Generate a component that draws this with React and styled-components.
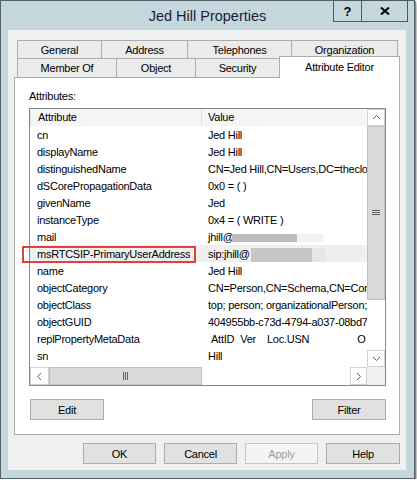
import React from "react";
import styled, { createGlobalStyle } from "styled-components";

const GlobalStyle = createGlobalStyle`
  body {
    margin: 0;
    background: #fff;
    font-family: "Liberation Sans", Arial, sans-serif;
  }
`;

const Window = styled.div`
  width: 415px;
  height: 479px;
  box-sizing: border-box;
  border: 1px solid #56626a;
  background: #c3d7dd;
  display: flex;
  flex-direction: column;
  box-shadow: 1px 1px 0 #7d878c, 3px 3px 5px rgba(0, 0, 0, 0.35);
`;

const TitleBar = styled.div`
  height: 29px;
  flex: none;
  display: grid;
  grid-template-columns: 1fr auto 1fr;
`;

const Title = styled.div`
  grid-column: 2;
  align-self: center;
  font-size: 14.5px;
  color: #1c1c38;
`;

const CaptionButtons = styled.div`
  grid-column: 3;
  justify-self: end;
  align-self: start;
  display: flex;
  margin: -1px 6px 0 0;
`;

const CaptionButton = styled.div`
  width: ${(p) => p.$w}px;
  height: 22px;
  box-sizing: border-box;
  border: 1px solid #4f5a60;
  margin-left: -1px;
  display: flex;
  align-items: center;
  justify-content: center;
  font-weight: bold;
  font-size: 13px;
  color: #000;
`;

const Client = styled.div`
  flex: 1;
  margin: 0 8px 8px 7px;
  background: #f0f0f0;
  padding: 10px 6px 0 6px;
  display: flex;
  flex-direction: column;
  font-size: 11px;
  letter-spacing: -0.25px;
  color: #000;
`;

const TabRow = styled.div`
  display: flex;
  align-items: flex-end;
  padding-left: 3px;
  height: ${(p) => p.$h}px;
  position: relative;
`;

const Tab = styled.div`
  width: ${(p) => p.$w}px;
  height: 100%;
  box-sizing: border-box;
  margin-right: -1px;
  border: 1px solid #acacac;
  border-bottom: none;
  background: #ebebeb;
  display: flex;
  align-items: center;
  justify-content: center;
  padding-top: ${(p) => (p.$top ? 1 : 0)}px;
`;

const ActiveTab = styled(Tab)`
  height: 22px;
  margin-bottom: -1px;
  padding: 0 0 2px;
  background: #fff;
  position: relative;
  z-index: 1;
`;

const Panel = styled.div`
  position: relative;
  height: 358px;
  box-sizing: border-box;
  border: 1px solid #acacac;
  background: #fff;
  padding: 12px 13px 0 14px;
  display: flex;
  flex-direction: column;
`;

const Label = styled.div`
  line-height: 13px;
  margin-bottom: 5px;
`;

const ListBox = styled.div`
  width: 357px;
  height: 278px;
  box-sizing: border-box;
  border: 1px solid #828790;
  display: grid;
  grid-template-columns: 1fr 18px;
  grid-template-rows: 1fr 18px;
`;

const ListBody = styled.div`
  overflow: hidden;
  white-space: nowrap;
`;

const Header = styled.div`
  display: grid;
  grid-template-columns: 171px 1fr;
  height: 17px;
  line-height: 17px;
  background: #f5f5f5;
  border-left: 1px solid #e4e4e4;
`;

const HeaderCell = styled.div`
  padding-left: ${(p) => (p.$first ? 7 : 6)}px;
  border-right: ${(p) => (p.$first ? "1px solid #e0e0e0" : "none")};
`;

const Row = styled.div`
  display: grid;
  grid-template-columns: 171px 1fr;
  height: 17px;
  box-sizing: border-box;
  padding-top: 2px;
  line-height: 15px;
  background: ${(p) => (p.$selected ? "#efefef" : "transparent")};
`;

const Cell = styled.div`
  padding-left: 7px;
  overflow: hidden;
`;

const Redact = styled.span`
  display: inline-block;
  vertical-align: middle;
  width: ${(p) => p.$w}px;
  height: ${(p) => p.$h}px;
  background: ${(p) => p.$c};
  margin-left: ${(p) => p.$ml || 0}px;
`;

const Gap = styled.span`
  display: inline-block;
  width: ${(p) => p.$w}px;
`;

const VScroll = styled.div`
  display: flex;
  flex-direction: column;
  background: #fff;
`;

const HScroll = styled.div`
  display: flex;
  background: #fff;
`;

const ScrollArrow = styled.div`
  flex: none;
  width: ${(p) => (p.$w ? `${p.$w}px` : "auto")};
  height: ${(p) => (p.$h ? `${p.$h}px` : "auto")};
  box-sizing: border-box;
  border: 1px solid #d2d2d2;
  display: flex;
  align-items: center;
  justify-content: center;
`;

const Thumb = styled.div`
  flex: none;
  width: ${(p) => (p.$w ? `${p.$w}px` : "auto")};
  height: ${(p) => (p.$h ? `${p.$h}px` : "auto")};
  box-sizing: border-box;
  background: #d9d9d9;
  border: 1px solid #c2c2c2;
  display: flex;
  align-items: center;
  justify-content: center;
`;

const Track = styled.div`
  flex: 1;
`;

const Corner = styled.div`
  background: #f0f0f0;
`;

const Annotation = styled.div`
  position: absolute;
  left: 7px;
  top: 168px;
  width: 174px;
  height: 17px;
  box-sizing: border-box;
  border: 2px solid #e2413c;
`;

const PanelButtons = styled.div`
  display: flex;
  justify-content: space-between;
  margin-top: 13px;
  padding-left: 1px;
`;

const Button = styled.div`
  width: ${(p) => p.$w || 74}px;
  height: 21px;
  box-sizing: border-box;
  border: 1px solid ${(p) => (p.$disabled ? "#c6c6c6" : "#adadad")};
  background: ${(p) => (p.$disabled ? "#f4f4f4" : "#e1e1e1")};
  color: ${(p) => (p.$disabled ? "#9d9d9d" : "#000")};
  display: flex;
  align-items: center;
  justify-content: center;
`;

const DialogButtons = styled.div`
  display: flex;
  justify-content: flex-end;
  gap: 8px;
  margin-top: 8px;
`;

const Chevron = ({ dir }) => {
  const paths = {
    up: "M1 5 L4.5 1.5 L8 5",
    down: "M1 2 L4.5 5.5 L8 2",
    left: "M5 1 L1.5 4.5 L5 8",
    right: "M2 1 L5.5 4.5 L2 8",
  };
  const horizontal = dir === "left" || dir === "right";
  return (
    <svg width={horizontal ? 7 : 9} height={horizontal ? 9 : 7} viewBox={horizontal ? "0 0 7 9" : "0 0 9 7"}>
      <path d={paths[dir]} fill="none" stroke="#606060" strokeWidth="1" />
    </svg>
  );
};

const Grip = ({ vertical }) =>
  vertical ? (
    <svg width="8" height="6" viewBox="0 0 8 6">
      <path d="M0 0.5 H8 M0 2.5 H8 M0 4.5 H8" stroke="#606060" strokeWidth="1" />
    </svg>
  ) : (
    <svg width="6" height="8" viewBox="0 0 6 8">
      <path d="M0.5 0 V8 M2.5 0 V8 M4.5 0 V8" stroke="#606060" strokeWidth="1" />
    </svg>
  );

const CloseGlyph = () => (
  <svg width="10" height="8" viewBox="0 0 10 8">
    <path d="M1 0.5 L9 7.5 M9 0.5 L1 7.5" stroke="#000" strokeWidth="2" />
  </svg>
);

// values are kept to what fits before the vertical scrollbar
const attributes = [
  ["cn", "Jed Hill"],
  ["displayName", "Jed Hill"],
  ["distinguishedName", "CN=Jed Hill,CN=Users,DC=theclo"],
  ["dSCorePropagationData", "0x0 = ( )"],
  ["givenName", "Jed"],
  ["instanceType", "0x4 = ( WRITE )"],
  ["mail", "mail"],
  ["msRTCSIP-PrimaryUserAddress", "sip"],
  ["name", "Jed Hill"],
  ["objectCategory", "CN=Person,CN=Schema,CN=Con"],
  ["objectClass", "top; person; organizationalPerson;"],
  ["objectGUID", "404955bb-c73d-4794-a037-08bd7"],
  ["replPropertyMetaData", "repl"],
  ["sn", "Hill"],
];

const renderValue = (value) => {
  if (value === "mail")
    return (
      <>
        jhill@
        <Redact $w={65} $h={8} $c="#bcbcbc" $ml={-2} />
        <Redact $w={26} $h={8} $c="#f2f2f2" />
      </>
    );
  if (value === "sip")
    return (
      <>
        sip:jhill@
        <Redact $w={61} $h={14} $c="#c6c6c6" $ml={1} />
        <Redact $w={14} $h={14} $c="#e6e6e6" />
      </>
    );
  if (value === "repl")
    return (
      <>
        <Gap $w={3} />
        AttID
        <Gap $w={6} />
        Ver
        <Gap $w={11} />
        Loc.USN
        <Gap $w={48} />
        O
      </>
    );
  return value;
};

export default function App() {
  return (
    <>
      <GlobalStyle />
      <Window>
        <TitleBar>
          <Title>Jed Hill Properties</Title>
          <CaptionButtons>
            <CaptionButton $w={29}>?</CaptionButton>
            <CaptionButton $w={47}>
              <CloseGlyph />
            </CaptionButton>
          </CaptionButtons>
        </TitleBar>
        <Client>
          <TabRow $h={18}>
            <Tab $w={85} $top>General</Tab>
            <Tab $w={87} $top>Address</Tab>
            <Tab $w={105} $top>Telephones</Tab>
            <Tab $w={107} $top>Organization</Tab>
          </TabRow>
          <TabRow $h={19}>
            <Tab $w={100}>Member Of</Tab>
            <Tab $w={80}>Object</Tab>
            <Tab $w={85}>Security</Tab>
            <ActiveTab $w={121}>Attribute Editor</ActiveTab>
          </TabRow>
          <Panel>
            <Label>Attributes:</Label>
            <ListBox>
              <ListBody>
                <Header>
                  <HeaderCell $first>Attribute</HeaderCell>
                  <HeaderCell>Value</HeaderCell>
                </Header>
                {attributes.map(([name, value]) => (
                  <Row key={name} $selected={value === "sip"}>
                    <Cell>{name}</Cell>
                    <Cell>{renderValue(value)}</Cell>
                  </Row>
                ))}
              </ListBody>
              <VScroll>
                <ScrollArrow $h={17}>
                  <Chevron dir="up" />
                </ScrollArrow>
                <Thumb $h={174}>
                  <Grip vertical />
                </Thumb>
                <Track />
                <ScrollArrow $h={17}>
                  <Chevron dir="down" />
                </ScrollArrow>
              </VScroll>
              <HScroll>
                <ScrollArrow $w={19}>
                  <Chevron dir="left" />
                </ScrollArrow>
                <Thumb $w={153}>
                  <Grip />
                </Thumb>
                <Track />
                <ScrollArrow $w={17}>
                  <Chevron dir="right" />
                </ScrollArrow>
              </HScroll>
              <Corner />
            </ListBox>
            <PanelButtons>
              <Button>Edit</Button>
              <Button>Filter</Button>
            </PanelButtons>
            <Annotation />
          </Panel>
          <DialogButtons>
            <Button $w={73}>OK</Button>
            <Button $w={73}>Cancel</Button>
            <Button $w={73} $disabled>Apply</Button>
            <Button $w={74}>Help</Button>
          </DialogButtons>
        </Client>
      </Window>
    </>
  );
}
